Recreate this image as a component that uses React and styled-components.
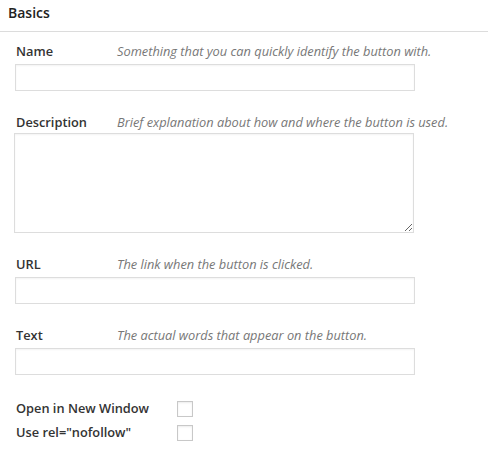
import React from 'react'
import styled, { createGlobalStyle } from 'styled-components'

const GlobalStyle = createGlobalStyle`
  body {
    margin: 0;
    background: #fff;
    font-family: "Open Sans", "Liberation Sans", sans-serif;
    color: #333;
  }
`

const fields = [
  { id: 'name', label: 'Name', hint: 'Something that you can quickly identify the button with.' },
  { id: 'description', label: 'Description', hint: 'Brief explanation about how and where the button is used.', multiline: true },
  { id: 'url', label: 'URL', hint: 'The link when the button is clicked.' },
  { id: 'text', label: 'Text', hint: 'The actual words that appear on the button.' },
]

const options = [
  { id: 'new-window', label: 'Open in New Window' },
  { id: 'nofollow', label: 'Use rel="nofollow"' },
]

const App = () => {
  return (
    <>
      <GlobalStyle />
      <Panel>
        <Heading>Basics</Heading>
        <Form>
          {fields.map((f) => (
            <Field key={f.id} $tight={f.multiline}>
              <LabelRow>
                <Label htmlFor={f.id}>{f.label}</Label>
                <Hint>{f.hint}</Hint>
              </LabelRow>
              {f.multiline ? <TextArea id={f.id} /> : <TextInput id={f.id} type="text" />}
            </Field>
          ))}
          <Options>
            {options.map((o) => (
              <OptionRow key={o.id}>
                <OptionLabel htmlFor={o.id}>{o.label}</OptionLabel>
                <Checkbox id={o.id} type="checkbox" />
              </OptionRow>
            ))}
          </Options>
        </Form>
      </Panel>
    </>
  )
}

export default App

const Panel = styled.div`
width: 488px;
height: 453px;
overflow: hidden;
`
const Heading = styled.h3`
margin: 0;
padding: 3px 8px 8px;
font-size: 14px;
line-height: 20px;
font-weight: 600;
color: #222;
border-bottom: 1px solid #dcdcdc;
`
const Form = styled.form`
display: flex;
flex-direction: column;
gap: 22px;
padding: 10px 0 0 15px;
`
const Field = styled.div`
display: flex;
flex-direction: column;
gap: ${(p) => (p.$tight ? '2px' : '4px')};
`
const LabelRow = styled.div`
display: flex;
align-items: baseline;
height: 18px;
line-height: 18px;
font-size: 12.8px;
`
const Label = styled.label`
width: 101px;
padding-left: 1px;
font-weight: 600;
color: #333;
`
const Hint = styled.span`
font-style: italic;
color: #777;
`
const TextInput = styled.input`
box-sizing: border-box;
width: 400px;
height: 27px;
margin: 0;
border: 1px solid #ddd;
background: #fff;
box-shadow: inset 0 1px 2px rgba(0, 0, 0, 0.05);
outline: none;
`
const TextArea = styled.textarea`
display: block;
box-sizing: border-box;
width: 400px;
height: 100px;
margin: 0 0 0 -1px;
border: 1px solid #ddd;
background: #fff;
box-shadow: inset 0 1px 2px rgba(0, 0, 0, 0.05);
outline: none;
`
const Options = styled.div`
display: flex;
flex-direction: column;
gap: 6px;
margin-top: 2px;
`
const OptionRow = styled.div`
display: flex;
align-items: center;
height: 18px;
`
const OptionLabel = styled.label`
width: 161px;
padding-left: 1px;
font-size: 12.8px;
line-height: 18px;
font-weight: 600;
color: #333;
`
const Checkbox = styled.input`
appearance: none;
box-sizing: border-box;
width: 16px;
height: 16px;
margin: 1px 0 0 0;
border: 1px solid #c8c8c8;
background: #fff;
box-shadow: inset 0 1px 2px rgba(0, 0, 0, 0.08);
`
